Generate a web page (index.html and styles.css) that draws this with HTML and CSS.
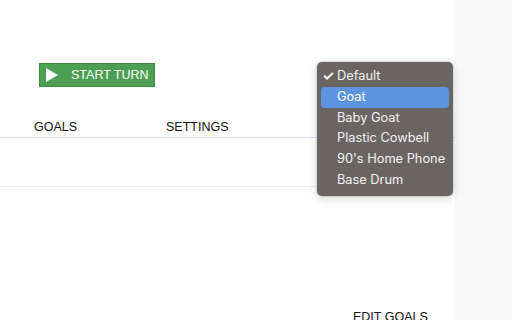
FILE: index.html
```html
<!DOCTYPE html>
<html lang="en">
<head>
  <meta charset="UTF-8">
  <title>Turn Timer</title>
  <link rel="stylesheet" href="styles.css">
</head>
<body>

  <div class="page">
    <!-- Main column -->
    <div class="main">
      <div class="toolbar">
        <button class="start-btn">
          <svg class="play-icon" width="12" height="14" viewBox="0 0 12 14">
            <polygon points="0,0 12,7 0,14" fill="#fff"/>
          </svg>
          <span>START TURN</span>
        </button>
      </div>

      <div class="tabs">
        <div class="tab">GOALS</div>
        <div class="tab">SETTINGS</div>
      </div>

      <div class="strip"></div>

      <div class="content">
        <div class="edit-goals">EDIT GOALS</div>
      </div>
    </div>

    <!-- Side panel -->
    <div class="side"></div>
  </div>

  <!-- Sound picker (open) -->
  <ul class="menu">
    <li class="menu-item checked">Default</li>
    <li class="menu-item active">Goat</li>
    <li class="menu-item">Baby Goat</li>
    <li class="menu-item">Plastic Cowbell</li>
    <li class="menu-item">90's Home Phone</li>
    <li class="menu-item">Base Drum</li>
  </ul>

</body>
</html>
```

FILE: styles.css
```css
body {
  margin: 0;
  padding: 0;
  overflow: hidden;
  font-family: "Liberation Sans", Arial, sans-serif;
  color: #111;
  background: #fff;
}

.page {
  display: flex;
  height: 320px;
}

/* Main column */
.main {
  width: 455px;
  display: flex;
  flex-direction: column;
  overflow: hidden;
}

.main > div {
  flex-shrink: 0;
}

.toolbar {
  padding: 63px 0 0 39px;
  height: 24px;
}

.start-btn {
  display: flex;
  align-items: center;
  width: 116px;
  height: 24px;
  padding: 0 0 0 6px;
  background: #4c9f52;
  border: 1px solid #3e8d45;
  color: #fff;
  font-family: "Liberation Sans", Arial, sans-serif;
  font-size: 12.5px;
  cursor: pointer;
}

.play-icon {
  margin-right: 13px;
}

/* Tabs */
.tabs {
  display: flex;
  margin-top: 14px;
  height: 36px;
  border-bottom: 1px solid #dcdcf4;
}

.tab {
  width: 166px;
  padding: 19px 0 0 34px;
  box-sizing: border-box;
  font-size: 12.5px;
}

.tab + .tab {
  padding-left: 0;
}

.strip {
  height: 48px;
  border-bottom: 1px solid #ebebeb;
}

.edit-goals {
  margin: 123px 0 0 353px;
  font-size: 12.5px;
}

/* Side panel */
.side {
  flex: 1;
  background: #f9f9f9;
}

/* Dropdown menu */
.menu {
  position: absolute;
  top: 62px;
  left: 317px;
  width: 136px;
  margin: 0;
  padding: 4px 4px 5px;
  box-sizing: border-box;
  list-style: none;
  background: #6a6563;
  border-radius: 5px;
  box-shadow: 0 2px 10px rgba(0, 0, 0, 0.18), 0 0 0 1px rgba(0, 0, 0, 0.08);
  font-family: Inter, "Liberation Sans", sans-serif;
  font-size: 12.8px;
  color: #f2f2f2;
}

.menu-item {
  height: 20.8px;
  line-height: 20.8px;
  padding-left: 16px;
  border-radius: 4px;
  white-space: nowrap;
  position: relative;
}

.menu-item.checked::before {
  content: "\2713";
  position: absolute;
  left: 1px;
  font-size: 14px;
  font-weight: bold;
}

.menu-item.active {
  background: #5f95e0;
  color: #fff;
}
```
